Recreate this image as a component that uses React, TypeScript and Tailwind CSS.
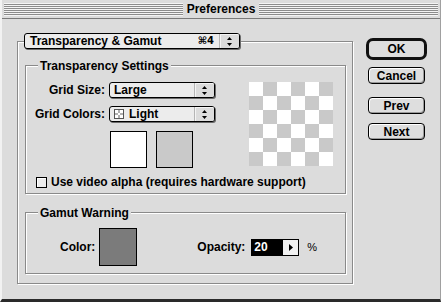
import React from "react";

function UpDown() {
  return (
    <svg width="5" height="9" viewBox="0 0 5 9" className="block">
      <path d="M2.5 0 L5 3 H0 Z" fill="#000" />
      <path d="M0 6 H5 L2.5 9 Z" fill="#000" />
    </svg>
  );
}

function ArrowBox() {
  return (
    <div className="w-[20px] flex items-center justify-center border-l border-l-[#b5b5b5] bg-[#dcdcdc] rounded-r-[2px] shadow-[inset_1px_1px_0_#f4f4f4]">
      <UpDown />
    </div>
  );
}

function MiniChecker() {
  const cells = [0, 1, 2, 3, 4, 5, 6, 7, 8];
  return (
    <div className="w-[10px] h-[10px] border border-[#555] grid grid-cols-3">
      {cells.map((i) => (
        <div key={i} className={i % 2 === 0 ? "bg-white" : "bg-[#b0b0b0]"} />
      ))}
    </div>
  );
}

function Button({ label }: { label: string }) {
  return (
    <div className="h-[17px] w-[57px] rounded-[4px] border border-black bg-[#dedede] shadow-[inset_1px_1px_0_#fff,inset_-1px_-1px_0_#9a9a9a] flex items-center justify-center">
      {label}
    </div>
  );
}

export default function App() {
  const checker = Array.from({ length: 36 }, (_, i) => i);
  return (
    <div className="w-[441px] h-[302px] bg-[#dcdcdc] font-['Liberation_Sans',Arial,sans-serif] text-[12px] font-bold text-black leading-none flex flex-col border-l-2 border-l-[#f2f2f2] border-r border-r-[#a0a0a0] border-b-[3px] border-b-[#2a2a2a] overflow-hidden select-none">
      {/* Title bar */}
      <div className="h-[19px] flex items-center px-[2px] border-b border-b-[#7a7a7a] shrink-0">
        <div className="flex-1 h-[13px] bg-[repeating-linear-gradient(to_bottom,#f4f4f4_0px,#f4f4f4_1px,#8c8c8c_1px,#8c8c8c_2px)]" />
        <span className="px-[4px] text-[12px]">Preferences</span>
        <div className="flex-1 h-[13px] bg-[repeating-linear-gradient(to_bottom,#f4f4f4_0px,#f4f4f4_1px,#8c8c8c_1px,#8c8c8c_2px)]" />
      </div>

      {/* Body */}
      <div className="flex items-start pl-[15px]">
        {/* Outer group */}
        <div className="mt-[22px] w-[336px] h-[243px] border border-[#8a8a8a] shadow-[1px_1px_0_#fff,inset_1px_1px_0_#fff] flex flex-col">
          {/* Section popup */}
          <div className="-mt-[9px] ml-[6px] w-[216px] h-[16px] flex items-stretch rounded-[3px] border border-black bg-[#ececec] shadow-[1px_1px_0_#6b6b6b]">
            <div className="flex-1 flex items-center pl-[5px]">
              <span>Transparency &amp; Gamut</span>
              <span className="ml-auto mr-[5px] font-['DejaVu_Sans',sans-serif] text-[10px] font-bold">⌘4</span>
            </div>
            <ArrowBox />
          </div>

          {/* Transparency Settings */}
          <div className="mt-[16px] ml-[7px] w-[321px] h-[129px] border border-[#8a8a8a] shadow-[1px_1px_0_#fff,inset_1px_1px_0_#fff] flex flex-col">
            <div className="-mt-[7px] ml-[12px] self-start bg-[#dcdcdc] px-[2px] h-[13px] flex items-center">
              Transparency Settings
            </div>
            <div className="mt-[10px] flex items-start">
              <div className="flex flex-col w-[190px]">
                <div className="flex items-center h-[16px]">
                  <span className="w-[79px] text-right">Grid Size:</span>
                  <div className="ml-[4px] w-[106px] h-[16px] flex items-stretch rounded-[3px] border border-black bg-[#ececec] shadow-[1px_1px_0_#6b6b6b]">
                    <div className="flex-1 flex items-center pl-[4px]">Large</div>
                    <ArrowBox />
                  </div>
                </div>
                <div className="mt-[8px] flex items-center h-[16px]">
                  <span className="w-[79px] text-right">Grid Colors:</span>
                  <div className="ml-[4px] w-[106px] h-[16px] flex items-stretch rounded-[3px] border border-black bg-[#ececec] shadow-[1px_1px_0_#6b6b6b]">
                    <div className="flex-1 flex items-center pl-[4px] gap-[5px]">
                      <MiniChecker />
                      <span>Light</span>
                    </div>
                    <ArrowBox />
                  </div>
                </div>
                <div className="mt-[9px] ml-[84px] flex gap-[9px]">
                  <div className="w-[37px] h-[37px] border border-black bg-white" />
                  <div className="w-[37px] h-[37px] border border-black bg-[#c9c9c9]" />
                </div>
              </div>
              <div className="ml-[33px] w-[84px] h-[84px] grid grid-cols-6 grid-rows-6">
                {checker.map((i) => {
                  const r = Math.floor(i / 6);
                  const c = i % 6;
                  return (
                    <div
                      key={i}
                      className={(r + c) % 2 === 0 ? "bg-white" : "bg-[#c9c9c9]"}
                    />
                  );
                })}
              </div>
            </div>
            <div className="mt-[8px] pl-[10px] flex items-center h-[12px]">
              <div className="w-[11px] h-[11px] border border-black bg-[#ececec] shadow-[inset_1px_1px_0_#fff]" />
              <span className="ml-[4px]">Use video alpha (requires hardware support)</span>
            </div>
          </div>

          {/* Gamut Warning */}
          <div className="mt-[18px] ml-[7px] w-[321px] h-[62px] border border-[#8a8a8a] shadow-[1px_1px_0_#fff,inset_1px_1px_0_#fff] flex flex-col">
            <div className="-mt-[7px] ml-[12px] self-start bg-[#dcdcdc] px-[2px] h-[13px] flex items-center">
              Gamut Warning
            </div>
            <div className="mt-[9px] flex items-center">
              <span className="ml-[34px]">Color:</span>
              <div className="ml-[4px] w-[38px] h-[38px] border border-black bg-[#7b7b7b]" />
              <span className="ml-[60px]">Opacity:</span>
              <div className="ml-[6px] h-[17px] flex border border-black bg-white">
                <div className="w-[30px] bg-black text-white flex items-center pl-[2px]">20</div>
                <div className="w-[16px] border-l border-l-black bg-[#f2f2f2] flex items-center justify-center">
                  <svg width="4" height="7" viewBox="0 0 4 7">
                    <path d="M0 0 L4 3.5 L0 7 Z" fill="#000" />
                  </svg>
                </div>
              </div>
              <span className="ml-[8px] font-normal text-[11px]">%</span>
            </div>
          </div>
        </div>

        {/* Buttons */}
        <div className="ml-[13px] mt-[19px] w-[61px] flex flex-col items-center">
          <div className="w-[61px] h-[22px] rounded-[7px] border-[3px] border-[#111] flex items-center justify-center">
            <div className="w-[53px] h-[14px] rounded-[3px] bg-[#dedede] flex items-center justify-center">OK</div>
          </div>
          <div className="mt-[7px]"><Button label="Cancel" /></div>
          <div className="mt-[13px]"><Button label="Prev" /></div>
          <div className="mt-[9px]"><Button label="Next" /></div>
        </div>
      </div>
    </div>
  );
}
